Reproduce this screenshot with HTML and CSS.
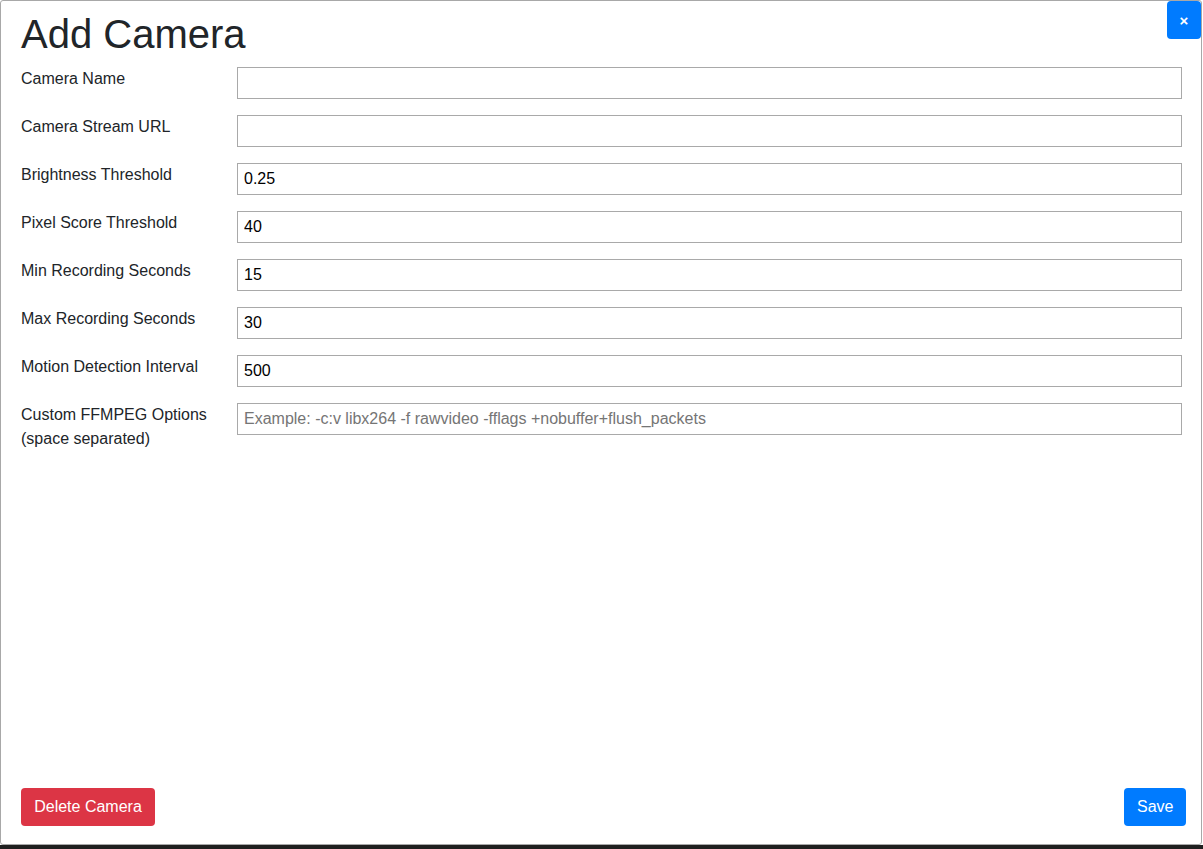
FILE: index.html
```html
<!DOCTYPE html>
<html>
<head>
<meta charset="utf-8">
<link rel="stylesheet" href="styles.css">
</head>
<body>
<div class="modal">
  <button class="close-btn" type="button">×</button>
  <h1 class="title">Add Camera</h1>
  <form class="form">
    <label class="label">Camera Name</label>
    <input class="input" type="text" value="">
    <label class="label">Camera Stream URL</label>
    <input class="input" type="text" value="">
    <label class="label">Brightness Threshold</label>
    <input class="input" type="text" value="0.25">
    <label class="label">Pixel Score Threshold</label>
    <input class="input" type="text" value="40">
    <label class="label">Min Recording Seconds</label>
    <input class="input" type="text" value="15">
    <label class="label">Max Recording Seconds</label>
    <input class="input" type="text" value="30">
    <label class="label">Motion Detection Interval</label>
    <input class="input" type="text" value="500">
    <label class="label">Custom FFMPEG Options (space separated)</label>
    <input class="input" type="text" placeholder="Example: -c:v libx264 -f rawvideo -fflags +nobuffer+flush_packets">
  </form>
  <div class="footer">
    <button class="btn btn-danger" type="button">Delete Camera</button>
    <button class="btn btn-primary" type="button">Save</button>
  </div>
</div>
</body>
</html>
```
FILE: styles.css
```css
html, body {
  margin: 0;
  padding: 0;
  background: #ffffff;
  height: 849px;
  overflow: hidden;
}
body {
  font-family: "Liberation Sans", Arial, sans-serif;
  color: #212529;
  background: linear-gradient(to bottom, #ffffff 845px, #1f1f1f 845px);
}
.modal {
  position: relative;
  box-sizing: border-box;
  width: 1202px;
  height: 845px;
  background: #fff;
  border: 1px solid #a8a8a8;
  border-radius: 3px;
  padding: 0 19px 18px 20px;
  display: flex;
  flex-direction: column;
}
.close-btn {
  position: absolute;
  top: 0;
  right: 0;
  width: 34px;
  height: 38px;
  border: none;
  border-radius: 4px;
  background: #007bff;
  color: #fff;
  font-family: "Liberation Sans", Arial, sans-serif;
  font-size: 15px;
  font-weight: bold;
  padding: 0;
  line-height: 1;
}
.title {
  margin: 9px 0 9px 0;
  font-size: 40px;
  line-height: 48px;
  font-weight: 500;
  color: #212529;
}
.form {
  display: grid;
  grid-template-columns: 216px 1fr;
  row-gap: 16px;
  align-items: start;
}
.label {
  font-size: 16px;
  line-height: 24px;
  padding-right: 14px;
}
.input {
  box-sizing: border-box;
  width: 945px;
  height: 32px;
  border: 1px solid #a9a9a9;
  border-radius: 0;
  padding: 0 6px;
  font-family: "Liberation Sans", Arial, sans-serif;
  font-size: 16px;
  color: #000;
  background: #fff;
  outline: none;
}
.input::placeholder {
  color: #757575;
}
.footer {
  margin-top: auto;
  display: flex;
  justify-content: space-between;
  align-items: center;
  margin-right: -4px;
}
.btn {
  height: 38px;
  border: none;
  border-radius: 4px;
  color: #fff;
  font-family: "Liberation Sans", Arial, sans-serif;
  font-size: 16px;
  padding: 0 13px;
  line-height: 38px;
}
.btn-danger {
  background: #dc3545;
  width: 134px;
}
.btn-primary {
  background: #007bff;
  width: 62px;
}
```
